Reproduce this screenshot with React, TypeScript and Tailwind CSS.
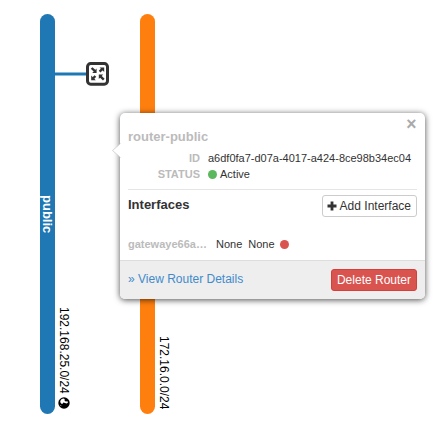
function RouterNode() {
  return (
    <svg className="absolute left-[55px] top-[60px]" width="56" height="28" viewBox="0 0 56 28">
      <path d="M0 14H31" stroke="#1f77b4" strokeWidth="3" />
      <rect x="32.5" y="3.6" width="20" height="20.6" rx="3.2" fill="#fff" stroke="#333" strokeWidth="3" />
      <path d="M36.6 8l3.4 3.2M48.8 19.6l-3.4-3.2M44.6 11.6l2.8-2.8M37.6 18.8l2.8-2.8" stroke="#333" strokeWidth="2.4" />
      <path d="M41.6 8.6v4.4h-4.4zM49.2 7.4v4.6L44.6 7.4zM36.2 20.2v-4.6l4.6 4.6zM43.8 19v-4.4h4.4z" fill="#333" />
    </svg>
  );
}

function GlobeIcon() {
  return (
    <svg width="12" height="12" viewBox="0 0 12 12">
      <circle cx="6" cy="6" r="5.7" fill="#000" />
      <path d="M3.4 2.2L5.2 1.4l1.5.6-.2 1.5 1.2 1.1 1.9-.3.3 1.5-1.3.8-1.6-.7-1.6-.3-1.1 1.3-1.2-.4-.9-1.4.3-1.5z" fill="#fff" />
      <path d="M2.2 7.8l1 .6.2.9-.8-.5z" fill="#fff" />
    </svg>
  );
}

function Network({ className, name }: { className: string; name?: string }) {
  return (
    <div className={`absolute top-[14px] flex h-[400px] w-[15px] items-center justify-center rounded-full text-[13px] leading-[15px] font-bold text-white ${className}`}>
      {name && <span className="[writing-mode:vertical-rl]">{name}</span>}
    </div>
  );
}

function RouterPopup() {
  return (
    <section className="absolute left-[120px] top-[113px] flex h-[186px] w-[305px] flex-col rounded-[5px] bg-white text-[11px] leading-4 text-[#333] shadow-[0_1px_6px_rgba(0,0,0,0.7)]">
      <svg className="absolute -left-[8px] top-[30px]" width="9" height="15" viewBox="0 0 9 15">
        <path d="M9 0L.5 7.5 9 15z" fill="#fff" />
        <path d="M8.5.5L.5 7.5l8 7" fill="none" stroke="#ccc" strokeWidth=".8" />
      </svg>
      <button className="absolute right-[8.5px] top-[3px] text-[17.5px] leading-4 font-bold text-[#aaa]">×</button>
      <div className="flex grow flex-col px-2 pt-4">
        <h3 className="text-[13px] leading-4 font-bold text-[#bbb]">router-public</h3>
        <dl className="mt-[5px] grid grid-cols-[72px_1fr] gap-x-2">
          <dt className="text-right font-bold text-[#bbb]">ID</dt>
          <dd className="whitespace-nowrap">a6df0fa7-d07a-4017-a424-8ce98b34ec04</dd>
          <dt className="text-right font-bold text-[#bbb]">STATUS</dt>
          <dd className="flex items-center gap-[3px]">
            <span className="size-[9px] rounded-full bg-[#5cb85c]" />
            Active
          </dd>
        </dl>
        <div className="mt-[7px] flex items-start justify-between border-t border-[#e5e5e5] pt-[5px]">
          <h4 className="mt-[2px] text-[13px] leading-4 font-bold">Interfaces</h4>
          <button className="flex h-[22px] items-center gap-[3px] rounded-[3px] border border-[#ccc] pr-[5px] pl-1 text-[12px]">
            <svg width="10" height="10" viewBox="0 0 10 10">
              <path d="M5 .5v9M.5 5h9" stroke="#333" strokeWidth="2.8" />
            </svg>
            Add Interface
          </button>
        </div>
        <div className="mt-[19px] flex items-center">
          <span className="w-[88px] font-bold text-[#bbb]">gatewaye66a…</span>
          <span>None</span>
          <span className="ml-[6px]">None</span>
          <span className="ml-[5px] size-[9px] rounded-full bg-[#d9534f]" />
        </div>
      </div>
      <footer className="flex h-[39px] items-center justify-between rounded-b-[5px] border-t border-[#ddd] bg-[#eee] px-2 text-[12px]">
        <a className="pb-[3px] text-[#428bca]">» View Router Details</a>
        <button className="h-[22px] rounded-[3px] border border-[#d43f3a] bg-[#d9534f] px-[5px] text-white">Delete Router</button>
      </footer>
    </section>
  );
}

export default function App() {
  return (
    <main className="relative h-[430px] w-[437px] overflow-hidden bg-white font-['Liberation_Sans',Arial,sans-serif]">
      <Network className="left-[40px] bg-[#1f77b4]" name="public" />
      <Network className="left-[140px] bg-[#ff7f0e]" />
      <RouterNode />
      <div className="absolute bottom-[21px] left-[56px] flex items-center gap-[3px] text-[12px] leading-[15px] text-black [writing-mode:vertical-rl]">
        192.168.25.0/24
        <GlobeIcon />
      </div>
      <div className="absolute bottom-[21px] left-[156px] text-[12px] leading-[15px] text-black [writing-mode:vertical-rl]">172.16.0.0/24</div>
      <RouterPopup />
    </main>
  );
}
